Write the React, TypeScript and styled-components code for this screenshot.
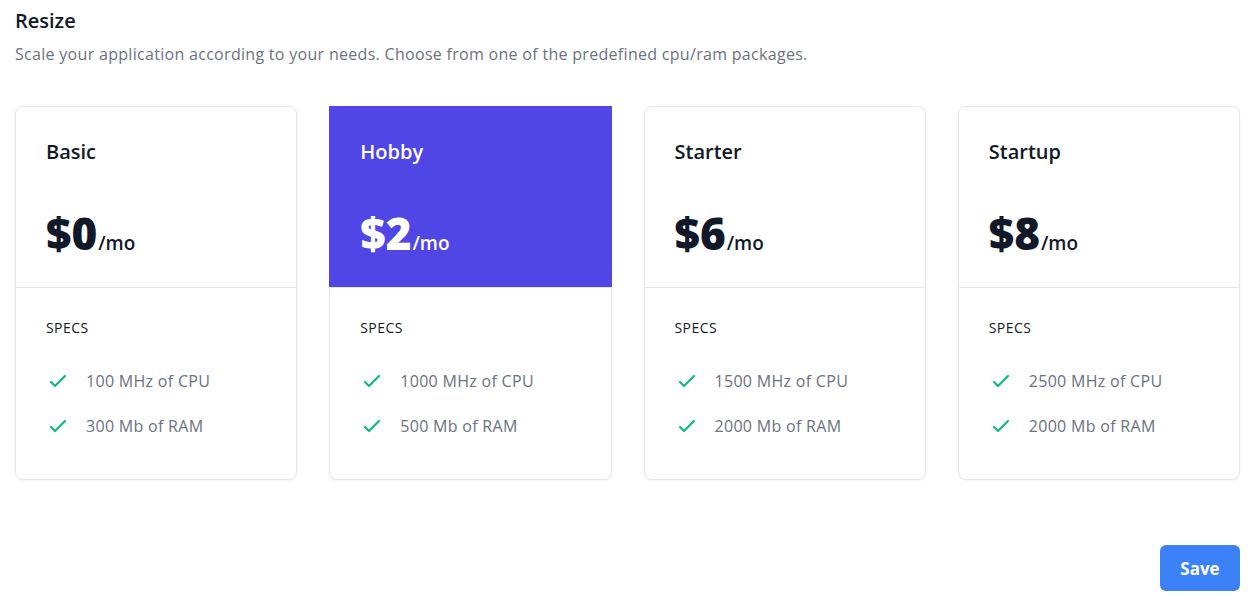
import React from "react";
import styled, { createGlobalStyle } from "styled-components";

const Global = createGlobalStyle`
  * { box-sizing: border-box; }
  html, body { margin: 0; padding: 0; background: #ffffff; }
  body {
    font-family: "Open Sans", "Noto Sans", "Liberation Sans", sans-serif;
    color: #111827;
    -webkit-font-smoothing: antialiased;
  }
`;

const Page = styled.div`
  width: 1254px;
  min-height: 606px;
  padding: 7px 14px 15px 15px;
  display: flex;
  flex-direction: column;
`;

const Title = styled.h2`
  margin: 0;
  font-size: 20px;
  line-height: 28px;
  font-weight: 550;
  color: #111827;
`;

const Subtitle = styled.p`
  margin: 7px 0 0;
  font-size: 16px;
  line-height: 24px;
  letter-spacing: 0.3px;
  color: #6b7280;
`;

const Grid = styled.div`
  margin-top: 40px;
  display: grid;
  grid-template-columns: repeat(4, 1fr);
  gap: 32px;
`;

const Card = styled.div<{ $active?: boolean }>`
  border: 1px solid #e5e7eb;
  border-top-color: ${(p) => (p.$active ? "#4f46e5" : "#e5e7eb")};
  border-radius: ${(p) => (p.$active ? "0 0 8px 8px" : "8px")};
  box-shadow: 0 1px 2px rgba(0, 0, 0, 0.05);
  background: #ffffff;
  display: flex;
  flex-direction: column;
`;

const Header = styled.div<{ $active?: boolean }>`
  padding: ${(p) => (p.$active ? "32px 31px 32px 31px" : "31px 30px 32px 30px")};
  margin: ${(p) => (p.$active ? "-1px -1px 0" : "0")};
  background: ${(p) => (p.$active ? "#4f46e5" : "transparent")};
  color: ${(p) => (p.$active ? "#ffffff" : "#111827")};
  border-bottom: 1px solid #e5e7eb;
`;

const PlanName = styled.h3`
  margin: 0;
  font-size: 20px;
  line-height: 28px;
  font-weight: 550;
  color: inherit;
`;

const Price = styled.p`
  margin: 45px 0 0;
  font-size: 44px;
  line-height: 44px;
  font-weight: 800;
  color: inherit;
`;

const Per = styled.span`
  font-size: 19px;
  line-height: 1;
  font-weight: 600;
  margin-left: 1px;
`;

const Specs = styled.div`
  padding: 30px 30px 41px;
`;

const SpecsLabel = styled.h4`
  margin: 0;
  font-size: 14px;
  line-height: 20px;
  font-weight: 500;
  letter-spacing: 0.03em;
  text-transform: uppercase;
  color: #111827;
`;

const List = styled.ul`
  list-style: none;
  margin: 31px 0 0;
  padding: 0;
  display: flex;
  flex-direction: column;
  gap: 21px;
`;

const Item = styled.li`
  display: flex;
  align-items: center;
  gap: 16px;
  font-size: 16px;
  line-height: 24px;
  letter-spacing: 0.3px;
  color: #6b7280;
`;

const CheckIcon = styled.svg`
  width: 24px;
  height: 24px;
  flex-shrink: 0;
  color: #10b981;
`;

const Footer = styled.div`
  margin-top: auto;
  display: flex;
  justify-content: flex-end;
`;

const SaveButton = styled.button`
  width: 80px;
  height: 46px;
  border: none;
  border-radius: 6px;
  background: #3b82f6;
  color: #ffffff;
  font-family: inherit;
  font-size: 17px;
  font-weight: 700;
  cursor: pointer;
`;

const Check = () => (
  <CheckIcon viewBox="0 0 24 24" fill="none" stroke="currentColor" strokeWidth={2.2}>
    <path strokeLinecap="round" strokeLinejoin="round" d="M5 13l4 4L19 7" />
  </CheckIcon>
);

const plans = [
  { name: "Basic", price: 0, cpu: "100 MHz of CPU", ram: "300 Mb of RAM" },
  { name: "Hobby", price: 2, cpu: "1000 MHz of CPU", ram: "500 Mb of RAM", active: true },
  { name: "Starter", price: 6, cpu: "1500 MHz of CPU", ram: "2000 Mb of RAM" },
  { name: "Startup", price: 8, cpu: "2500 MHz of CPU", ram: "2000 Mb of RAM" },
];

export default function App() {
  return (
    <>
      <Global />
      <Page>
        <Title>Resize</Title>
        <Subtitle>
          Scale your application according to your needs. Choose from one of the predefined cpu/ram packages.
        </Subtitle>
        <Grid>
          {plans.map((p) => (
            <Card key={p.name} $active={p.active}>
              <Header $active={p.active}>
                <PlanName>{p.name}</PlanName>
                <Price>
                  ${p.price}
                  <Per>/mo</Per>
                </Price>
              </Header>
              <Specs>
                <SpecsLabel>Specs</SpecsLabel>
                <List>
                  <Item>
                    <Check />
                    {p.cpu}
                  </Item>
                  <Item>
                    <Check />
                    {p.ram}
                  </Item>
                </List>
              </Specs>
            </Card>
          ))}
        </Grid>
        <Footer>
          <SaveButton>Save</SaveButton>
        </Footer>
      </Page>
    </>
  );
}
